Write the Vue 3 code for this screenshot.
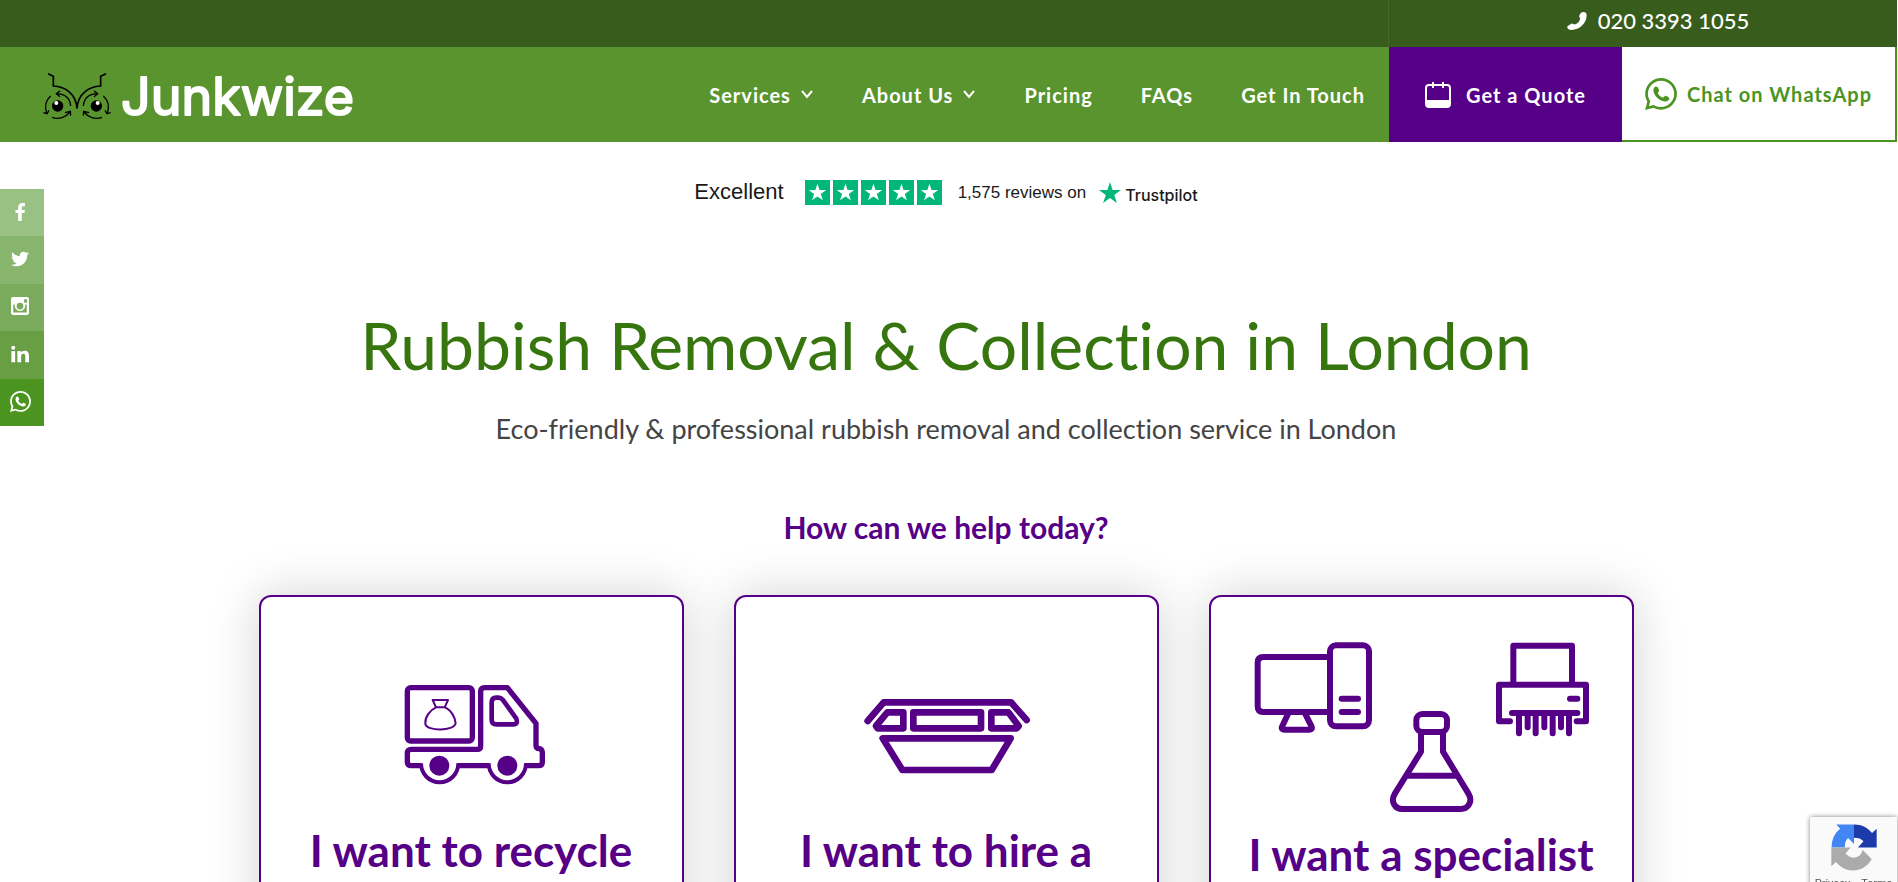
<script setup>
const navLinks = [
  { label: 'Services', menu: true },
  { label: 'About Us', menu: true },
  { label: 'Pricing' },
  { label: 'FAQs' },
  { label: 'Get In Touch' },
]

const star = 'M12 2l2.4 7.3h7.7l-6.2 4.5 2.4 7.3-6.3-4.5-6.3 4.5 2.4-7.3-6.2-4.5h7.7z'

const whatsapp = 'M.057 24l1.687-6.163c-1.041-1.804-1.588-3.849-1.587-5.946.003-6.556 5.338-11.891 11.893-11.891 3.181.001 6.167 1.24 8.413 3.488 2.245 2.248 3.481 5.236 3.48 8.414-.003 6.557-5.338 11.892-11.893 11.892-1.99-.001-3.951-.5-5.688-1.448l-6.305 1.654zm6.597-3.807c1.676.995 3.276 1.591 5.392 1.592 5.448 0 9.886-4.434 9.889-9.885.002-5.462-4.415-9.89-9.881-9.892-5.452 0-9.887 4.434-9.889 9.884-.001 2.225.651 3.891 1.746 5.634l-.999 3.648 3.742-.981zM8.3 6.4c-.9 0-2 1.2-2 2.9 0 3.8 5 8.3 9 8.3 1.6 0 3-1 3-2.4 0-.6-2.4-1.9-3-1.9s-1.2 1.4-1.8 1.4c-1.2 0-3.9-2.6-3.9-3.5 0-.6 1-1.1 1-1.7s-1-3.1-2.3-3.1z'

const socials = [
  { name: 'Facebook', key: 'facebook', path: 'M9.5 24V13.4H6V9.2h3.5V6.2C9.5 2.3 11.6 0 15.3 0H18.5V4.2H16.3C14.8 4.2 14.3 4.9 14.3 6.3V9.2H18.5L18 13.4H14.3V24z' },
  { name: 'Twitter', key: 'twitter', path: 'M23.954 4.569c-.885.389-1.83.654-2.825.775 1.014-.611 1.794-1.574 2.163-2.723-.951.555-2.005.959-3.127 1.184-.896-.959-2.173-1.559-3.591-1.559-2.717 0-4.92 2.203-4.92 4.917 0 .39.045.765.127 1.124C7.691 8.094 4.066 6.13 1.64 3.161c-.427.722-.666 1.561-.666 2.475 0 1.71.87 3.213 2.188 4.096-.807-.026-1.566-.248-2.228-.616v.061c0 2.385 1.693 4.374 3.946 4.827-.413.111-.849.171-1.296.171-.314 0-.615-.03-.916-.086.631 1.953 2.445 3.377 4.604 3.417-1.68 1.319-3.809 2.105-6.102 2.105-.39 0-.779-.023-1.17-.067 2.189 1.394 4.768 2.209 7.557 2.209 9.054 0 13.999-7.496 13.999-13.986 0-.209 0-.42-.015-.63.961-.689 1.8-1.56 2.46-2.548l-.047-.02z' },
  { name: 'Instagram', key: 'instagram', path: 'M3 0H21Q24 0 24 3V21Q24 24 21 24H3Q0 24 0 21V3Q0 0 3 0zM17.5 3V7.5H21.5V3zM12 7.5A4.5 4.5 0 1 0 12 16.5A4.5 4.5 0 1 0 12 7.5zM3 10V20.5H21V10H18.8A7 7 0 1 1 5.2 10z' },
  { name: 'LinkedIn', key: 'linkedin', path: 'M.5 8H5.5V23H.5zM3 1A2.7 2.7 0 1 1 3 6.4A2.7 2.7 0 1 1 3 1zM8.500 8H13.2V10C14 8.6 15.7 7.6 18 7.6C22.5 7.6 24 10.3 24 14.5V23H19V15.5C19 13.4 18.7 11.8 16.5 11.8C14.2 11.8 13.5 13.4 13.5 15.5V23H8.5z' },
  { name: 'WhatsApp', key: 'whatsapp', path: whatsapp },
]
</script>

<template>
  <div class="page">
    <header>
      <div class="topbar">
        <a href="#" class="phone">
          <svg viewBox="0 0 60 54" width="20" height="18" aria-hidden="true">
            <path fill="currentColor" d="M42 2C50-2 59 0 59 10C59 34 37 54 14 54C4 54-2 48 2 42L13 35C17 33 20 39 25 37C32 34 38 28 39 21C40 17 35 15 37 10z" />
          </svg>
          <span>020 3393 1055</span>
        </a>
      </div>

      <div class="mainbar">
        <a href="#" class="logo" aria-label="Junkwize">
          <svg viewBox="0 0 320 64" width="320" height="64">
            <defs>
              <g id="owl-half">
                <path stroke-width="5" d="M144 221L160 229V258C195 260 228 280 231 325" />
                <path stroke-width="4" d="M152 288C136 302 134 322 140 340M130 338L141 341L147 331M212 318C210 296 196 282 170 281M180 272L169 281L180 290M156 352C176 360 198 352 210 336M195 338L211 334L212 347" />
                <circle cx="173" cy="318" r="17" fill="#000" stroke="none" />
                <circle cx="169" cy="309" r="6" fill="#fff" stroke="none" />
              </g>
            </defs>
            <g transform="scale(.3333) translate(-126 -189)" fill="none" stroke="#000">
              <use href="#owl-half" />
              <use href="#owl-half" transform="translate(462 0) scale(-1 1)" />
            </g>
            <text x="79" y="52" class="logo-text">Junkwize</text>
          </svg>
        </a>

        <nav>
          <a v-for="link in navLinks" :key="link.label" href="#">
            {{ link.label }}
            <svg v-if="link.menu" viewBox="0 0 14 9" width="14" height="9" aria-hidden="true">
              <path d="M2 1l5 6 5-6" fill="none" stroke="currentColor" stroke-width="2" />
            </svg>
          </a>
        </nav>

        <a href="#" class="cta quote">
          <svg viewBox="0 0 26 26" width="26" height="26" aria-hidden="true">
            <path fill="none" stroke="currentColor" stroke-width="2" d="M4 3H22Q25 3 25 6V22Q25 25 22 25H4Q1 25 1 22V6Q1 3 4 3zM8 0V6M18 0V6" />
            <path fill="currentColor" d="M1 18H25V22Q25 25 22 25H4Q1 25 1 22z" />
          </svg>
          <span>Get a Quote</span>
        </a>
        <a href="#" class="cta chat">
          <svg viewBox="0 0 24 24" width="32" height="32" aria-hidden="true">
            <path fill="currentColor" :d="whatsapp" />
          </svg>
          <span>Chat on WhatsApp</span>
        </a>
      </div>
    </header>

    <aside class="socials">
      <a v-for="item in socials" :key="item.key" href="#" :class="item.key" :aria-label="item.name">
        <svg viewBox="0 0 24 24" aria-hidden="true">
          <path fill="currentColor" fill-rule="evenodd" :d="item.path" />
        </svg>
      </a>
    </aside>

    <main>
      <a href="#" class="trustpilot">
        <span class="rating">Excellent</span>
        <span class="stars">
          <svg v-for="n in 5" :key="n" viewBox="0 0 24 24" width="25" height="25">
            <path fill="#fff" :d="star" transform="translate(2 2) scale(.83)" />
          </svg>
        </span>
        <span class="reviews">1,575 reviews on</span>
        <span class="brand">
          <svg viewBox="1 1 22 22" width="24" height="24"><path fill="#00b67a" :d="star" /></svg>
          <span>Trustpilot</span>
        </span>
      </a>

      <h1>Rubbish Removal &amp; Collection in London</h1>
      <p class="subtitle">Eco-friendly &amp; professional rubbish removal and collection service in London</p>
      <h2>How can we help today?</h2>

      <div class="cards">
        <a href="#" class="card">
          <!-- recycling truck -->
          <svg viewBox="-297 -150 1140 600" width="380" height="200">
            <g class="line" stroke-width="16">
              <rect x="82" y="83" width="195" height="160" rx="10" />
              <path stroke-linecap="butt" d="M124 317H94q-12 0-12-12V280q0-12 12-12H292q10 0 10-10V95q0-12 12-12H382L468 190V256q0 10 10 10q9 2 9 12V306q0 11-11 11H434M232 317H328" />
              <path stroke-width="14" d="M335 127q0-14 14-14h6q8 0 13 6L409 176q6 17-9 17H350q-15 0-15-14z" />
              <path stroke-width="12" stroke-linecap="butt" d="M123 310A56 57 0 0 0 235 310M326 310A56 57 0 0 0 438 310" />
              <path stroke-width="6" d="M158 120H204L194 142H168zM168 142C150 150 134 172 136 192C140 214 222 214 227 190C226 172 212 148 194 142" />
            </g>
            <circle cx="178" cy="317" r="30" class="solid" />
            <circle cx="382" cy="317" r="30" class="solid" />
          </svg>
          <h3>I want to recycle</h3>
        </a>

        <a href="#" class="card">
          <!-- skip -->
          <svg viewBox="-252 -180 1140 600" width="380" height="200">
            <g class="line" stroke-width="20">
              <path d="M83 153L131 97H513L560 150" />
              <path d="M142 127H190V175H113L108 168z" />
              <rect x="220" y="127" width="203" height="48" />
              <path d="M454 127H505L536 168L530 175H454z" />
              <path d="M128 205H512L455 300H187z" />
            </g>
          </svg>
          <h3>I want to hire a</h3>
        </a>

        <a href="#" class="card">
          <!-- computer, flask and shredder -->
          <svg viewBox="93 90 1140 612" width="380" height="204">
            <g class="line" stroke-width="18">
              <rect x="390" y="196" width="117" height="243" rx="18" />
              <path d="M390 231H190q-17 0-17 17V379q0 17 17 17H390M265 400L246 440q-3 9 6 9H329q9 0 6-9L315 400M425 356H474M425 396H474" />
              <rect x="649" y="402" width="92" height="54" rx="18" />
              <path d="M663 456V515L585 640C570 665 585 687 607 687H782C804 687 820 665 805 640L729 515V456M620 587H770" />
              <path d="M940 305V197H1116V305M930 424H897V314H1158V424H1130M936 399H1132M1110 356H1132" />
              <path d="M957 400V460M983 400V442M1007 400V460M1033 400V442M1058 400V460M1083 400V442M1107 400V460" />
            </g>
          </svg>
          <h3>I want a specialist</h3>
        </a>
      </div>
    </main>

    <div class="recaptcha">
      <svg viewBox="152 103 140 142" width="46" height="47" aria-hidden="true">
        <path fill="#4285f4" d="M154 174C154 150 163 130 180 117L168 104H222V163L204 145C196 152 194 162 194 174z" />
        <path fill="#1c3aa9" d="M222 104C246 104 264 114 277 130L291 117V174H234L251 155C244 147 236 144 222 144z" />
        <path fill="#ababab" d="M153 174V231L167 218C200 256 250 252 276 210L248 181C244 205 220 210 205 200L196 192L212 174z" />
      </svg>
      <div class="terms"><a href="#">Privacy</a><span>-</span><a href="#">Terms</a></div>
    </div>
  </div>
</template>

<style>
body {
  margin: 0;
  background: #fff;
}
</style>

<style scoped>
.page {
  height: 100vh;
  margin-right: 1px;
  overflow: hidden;
  font-family: Lato, "Open Sans", sans-serif;
  font-variant-ligatures: none;
}

a {
  color: inherit;
  text-decoration: none;
}

.topbar {
  display: flex;
  justify-content: flex-end;
  height: 47px;
  background: #385c1b;
}

.phone {
  display: flex;
  align-items: center;
  justify-content: center;
  gap: 11px;
  box-sizing: border-box;
  width: 509px;
  padding: 0 0 6px 30px;
  border-left: 1px solid #44692a;
  color: #fff;
  font-size: 22px;
  font-weight: 500;
}

.mainbar {
  display: flex;
  height: 95px;
  background: #5a942f;
}

.logo {
  display: flex;
  align-items: center;
  margin-right: auto;
  padding-left: 42px;
}

.logo-text {
  fill: #fff;
  stroke: #fff;
  stroke-width: 2px;
  stroke-linejoin: round;
  font-family: Inter, sans-serif;
  font-size: 52px;
  font-weight: 400;
}

nav {
  display: flex;
  color: #fff;
}

nav a {
  display: flex;
  align-items: center;
  gap: 9px;
  padding: 0 24px;
}

nav a,
.cta {
  font-size: 20px;
  font-weight: 700;
  letter-spacing: 1px;
  white-space: nowrap;
}

.cta {
  display: flex;
  align-items: center;
  justify-content: center;
  box-sizing: border-box;
}

.quote {
  gap: 15px;
  width: 233px;
  background: #550087;
  color: #fff;
}

.chat {
  gap: 10px;
  width: 275px;
  border: solid #4b941f;
  border-width: 0 2px 2px 0;
  background: #fff;
  color: #4b941f;
}

.socials {
  position: fixed;
  top: 189px;
  left: 0;
  display: grid;
  grid-template-rows: repeat(5, 1fr);
  width: 44px;
  height: 237px;
  color: #fff;
}

.socials a {
  display: flex;
  align-items: center;
  justify-content: center;
  padding: 0 4px 2px 0;
}

.socials svg {
  width: 18px;
  height: 18px;
}

.facebook { background: #9ac184; }
.twitter { background: #88b56d; }
.instagram { background: #7aab5c; }
.linkedin { background: #689f45; }
.whatsapp { background: #4b941f; }

.socials .whatsapp svg {
  width: 21px;
  height: 21px;
}

main {
  padding-right: 5px;
  text-align: center;
}

.trustpilot {
  display: flex;
  align-items: center;
  justify-content: center;
  height: 25px;
  margin-top: 38px;
  color: #191919;
  font-family: "Liberation Sans", Arial, sans-serif;
}

.rating {
  font-size: 22px;
  line-height: 26px;
  padding-bottom: 2px;
}

.stars {
  display: flex;
  gap: 3px;
  margin: 0 16px 0 21px;
}

.stars svg {
  background: #00b67a;
}

.reviews {
  font-size: 17px;
}

.brand {
  display: flex;
  align-items: center;
  gap: 3px;
  margin-left: 12px;
  font-family: Inter, "Liberation Sans", sans-serif;
  font-size: 16px;
  font-weight: 500;
}

.brand span {
  padding-top: 4px;
}

h1 {
  margin: 100px 0 0;
  color: #37760f;
  font-size: 66px;
  font-weight: 400;
  line-height: 80px;
}

.subtitle {
  margin: 26px 0 0;
  color: #444;
  font-size: 27px;
  line-height: 36px;
}

h2 {
  margin: 62px 0 0;
  color: #550087;
  font-size: 30px;
  font-weight: 700;
  line-height: 36px;
}

.cards {
  display: grid;
  grid-template-columns: repeat(3, 1fr);
  gap: 50px;
  max-width: 1375px;
  margin: 50px auto 0;
}

.card {
  display: flex;
  flex-direction: column;
  align-items: center;
  min-height: 420px;
  padding-top: 13px;
  border: 2px solid #550087;
  border-radius: 12px;
  background: #fff;
  box-shadow: 0 0 50px rgba(0, 0, 0, 0.18);
  color: #550087;
}

.line {
  fill: none;
  stroke: #550087;
  stroke-linecap: round;
  stroke-linejoin: round;
}

.solid {
  fill: #550087;
}

h3 {
  margin: 14px 0 0;
  font-size: 44px;
  font-weight: 700;
  line-height: 52px;
}

.recaptcha {
  position: fixed;
  right: 1px;
  bottom: -13px;
  box-sizing: border-box;
  width: 87px;
  height: 78px;
  padding-top: 7px;
  border-radius: 2px 0 0 2px;
  background: #fafafa;
  box-shadow: 0 0 5px gray;
  text-align: center;
}

.recaptcha svg {
  display: block;
  margin: 0 auto;
}

.terms {
  display: flex;
  justify-content: center;
  gap: 4px;
  margin-top: 5px;
  color: #555;
  font-family: Roboto, sans-serif;
  font-size: 11px;
  line-height: 16px;
}
</style>
